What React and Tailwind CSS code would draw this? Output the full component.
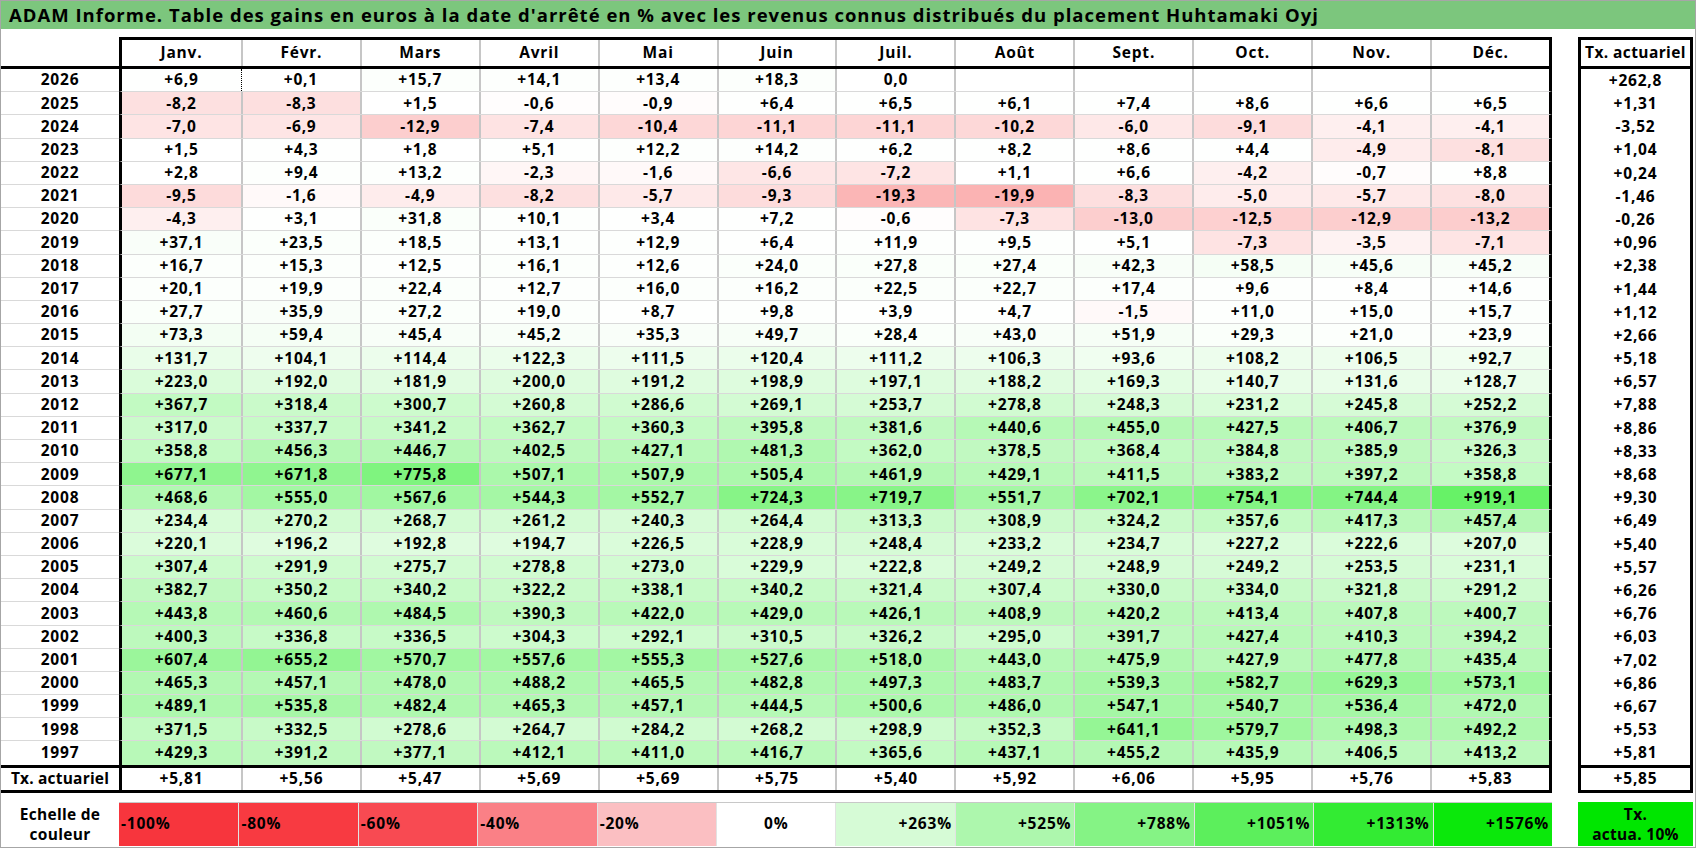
import React from "react";

const months = ["Janv.", "Févr.", "Mars", "Avril", "Mai", "Juin", "Juil.", "Août", "Sept.", "Oct.", "Nov.", "Déc."];

const raw = `2026|+6,9 +0,1 +15,7 +14,1 +13,4 +18,3 0,0 _ _ _ _ _|+262,8
2025|-8,2 -8,3 +1,5 -0,6 -0,9 +6,4 +6,5 +6,1 +7,4 +8,6 +6,6 +6,5|+1,31
2024|-7,0 -6,9 -12,9 -7,4 -10,4 -11,1 -11,1 -10,2 -6,0 -9,1 -4,1 -4,1|-3,52
2023|+1,5 +4,3 +1,8 +5,1 +12,2 +14,2 +6,2 +8,2 +8,6 +4,4 -4,9 -8,1|+1,04
2022|+2,8 +9,4 +13,2 -2,3 -1,6 -6,6 -7,2 +1,1 +6,6 -4,2 -0,7 +8,8|+0,24
2021|-9,5 -1,6 -4,9 -8,2 -5,7 -9,3 -19,3 -19,9 -8,3 -5,0 -5,7 -8,0|-1,46
2020|-4,3 +3,1 +31,8 +10,1 +3,4 +7,2 -0,6 -7,3 -13,0 -12,5 -12,9 -13,2|-0,26
2019|+37,1 +23,5 +18,5 +13,1 +12,9 +6,4 +11,9 +9,5 +5,1 -7,3 -3,5 -7,1|+0,96
2018|+16,7 +15,3 +12,5 +16,1 +12,6 +24,0 +27,8 +27,4 +42,3 +58,5 +45,6 +45,2|+2,38
2017|+20,1 +19,9 +22,4 +12,7 +16,0 +16,2 +22,5 +22,7 +17,4 +9,6 +8,4 +14,6|+1,44
2016|+27,7 +35,9 +27,2 +19,0 +8,7 +9,8 +3,9 +4,7 -1,5 +11,0 +15,0 +15,7|+1,12
2015|+73,3 +59,4 +45,4 +45,2 +35,3 +49,7 +28,4 +43,0 +51,9 +29,3 +21,0 +23,9|+2,66
2014|+131,7 +104,1 +114,4 +122,3 +111,5 +120,4 +111,2 +106,3 +93,6 +108,2 +106,5 +92,7|+5,18
2013|+223,0 +192,0 +181,9 +200,0 +191,2 +198,9 +197,1 +188,2 +169,3 +140,7 +131,6 +128,7|+6,57
2012|+367,7 +318,4 +300,7 +260,8 +286,6 +269,1 +253,7 +278,8 +248,3 +231,2 +245,8 +252,2|+7,88
2011|+317,0 +337,7 +341,2 +362,7 +360,3 +395,8 +381,6 +440,6 +455,0 +427,5 +406,7 +376,9|+8,86
2010|+358,8 +456,3 +446,7 +402,5 +427,1 +481,3 +362,0 +378,5 +368,4 +384,8 +385,9 +326,3|+8,33
2009|+677,1 +671,8 +775,8 +507,1 +507,9 +505,4 +461,9 +429,1 +411,5 +383,2 +397,2 +358,8|+8,68
2008|+468,6 +555,0 +567,6 +544,3 +552,7 +724,3 +719,7 +551,7 +702,1 +754,1 +744,4 +919,1|+9,30
2007|+234,4 +270,2 +268,7 +261,2 +240,3 +264,4 +313,3 +308,9 +324,2 +357,6 +417,3 +457,4|+6,49
2006|+220,1 +196,2 +192,8 +194,7 +226,5 +228,9 +248,4 +233,2 +234,7 +227,2 +222,6 +207,0|+5,40
2005|+307,4 +291,9 +275,7 +278,8 +273,0 +229,9 +222,8 +249,2 +248,9 +249,2 +253,5 +231,1|+5,57
2004|+382,7 +350,2 +340,2 +322,2 +338,1 +340,2 +321,4 +307,4 +330,0 +334,0 +321,8 +291,2|+6,26
2003|+443,8 +460,6 +484,5 +390,3 +422,0 +429,0 +426,1 +408,9 +420,2 +413,4 +407,8 +400,7|+6,76
2002|+400,3 +336,8 +336,5 +304,3 +292,1 +310,5 +326,2 +295,0 +391,7 +427,4 +410,3 +394,2|+6,03
2001|+607,4 +655,2 +570,7 +557,6 +555,3 +527,6 +518,0 +443,0 +475,9 +427,9 +477,8 +435,4|+7,02
2000|+465,3 +457,1 +478,0 +488,2 +465,5 +482,8 +497,3 +483,7 +539,3 +582,7 +629,3 +573,1|+6,86
1999|+489,1 +535,8 +482,4 +465,3 +457,1 +444,5 +500,6 +486,0 +547,1 +540,7 +536,4 +472,0|+6,67
1998|+371,5 +332,5 +278,6 +264,7 +284,2 +268,2 +298,9 +352,3 +641,1 +579,7 +498,3 +492,2|+5,53
1997|+429,3 +391,2 +377,1 +412,1 +411,0 +416,7 +365,6 +437,1 +455,2 +435,9 +406,5 +413,2|+5,81`;

const rows = raw.split("\n").map((line) => {
  const [y, vals, tx] = line.split("|");
  return { year: y, vals: vals.split(" ").map((v) => (v === "_" ? "" : v)), tx };
});

const totals = ["+5,81", "+5,56", "+5,47", "+5,69", "+5,69", "+5,75", "+5,40", "+5,92", "+6,06", "+5,95", "+5,76", "+5,83"];

const legend = [
  { t: "-100%", c: "#f7353d", a: "left" },
  { t: "-80%", c: "#f83a41", a: "left" },
  { t: "-60%", c: "#f84a52", a: "left" },
  { t: "-40%", c: "#fa8086", a: "left" },
  { t: "-20%", c: "#fbbfc2", a: "left" },
  { t: "0%", c: "#ffffff", a: "center" },
  { t: "+263%", c: "#d6fbd6", a: "right" },
  { t: "+525%", c: "#adf7ad", a: "right" },
  { t: "+788%", c: "#85f385", a: "right" },
  { t: "+1051%", c: "#5cef5c", a: "right" },
  { t: "+1313%", c: "#33eb33", a: "right" },
  { t: "+1576%", c: "#0be80b", a: "right" },
];

function cellColor(s) {
  if (!s) return "#ffffff";
  const v = parseFloat(s.replace(",", "."));
  if (v < 0) {
    const a = Math.min(-v, 60);
    const r = Math.round(255 - 0.2 * a);
    const g = Math.round(255 - 3.8 * a);
    return `rgb(${r},${g},${g})`;
  }
  const rb = Math.max(0, Math.round(255 - 0.165 * v));
  const g = Math.round(255 - 0.0146 * v);
  return `rgb(${rb},${g},${rb})`;
}

export default function App() {
  return (
    <div className="w-[1696px] h-[848px] bg-white border border-[#a6a6a6] flex flex-col font-['Open_Sans',sans-serif] font-bold text-black overflow-hidden">
      {/* Title */}
      <div className="h-[28px] bg-[#7cc67d] flex items-center pl-[8px] text-[18.5px] tracking-[1px] leading-none shrink-0">
        ADAM Informe. Table des gains en euros à la date d'arrêté en % avec les revenus connus distribués du placement Huhtamaki Oyj
      </div>

      <div className="h-[8px] shrink-0" />

      <div className="flex flex-col text-[15.5px] tracking-[0.8px] leading-none">
        {/* Header row */}
        <div className="flex h-[32px]">
          <div className="w-[118px] border-b-[3px] border-black" />
          <div className="w-[1433px] border-[3px] border-black grid grid-cols-12">
            {months.map((m, i) => (
              <div key={m} className={`flex items-center justify-center ${i > 0 ? "border-l-2 border-[#c6c6c6]" : ""}`}>
                {m}
              </div>
            ))}
          </div>
          <div className="w-[26px]" />
          <div className="w-[115px] border-[3px] border-black flex items-center justify-center tracking-[0.4px]">
            Tx. actuariel
          </div>
        </div>

        {/* Data rows */}
        {rows.map((r, ri) => {
          const last = ri === rows.length - 1;
          const lineCls = last ? "" : "border-b border-[#d9d9d9]";
          return (
            <div key={r.year} className="flex h-[23.2px]">
              <div className={`w-[118px] flex items-center justify-center ${lineCls}`}>{r.year}</div>
              <div className={`w-[1433px] border-x-[3px] border-x-black grid grid-cols-12 ${lineCls}`}>
                {r.vals.map((v, i) => {
                  let b = "";
                  if (i > 0) {
                    b = ri === 0 && i === 1 ? "border-l border-dotted border-black" : "border-l-2 border-[#c6c6c6]";
                  }
                  return (
                    <div key={i} className={`flex items-center justify-center ${b}`} style={{ backgroundColor: cellColor(v) }}>
                      {v}
                    </div>
                  );
                })}
              </div>
              <div className="w-[26px]" />
              <div className="w-[115px] border-x-[3px] border-black flex items-center justify-center">{r.tx}</div>
            </div>
          );
        })}

        {/* Totals row */}
        <div className="flex h-[28px]">
          <div className="w-[118px] border-y-[3px] border-black flex items-center justify-center tracking-[0.2px]">
            Tx. actuariel
          </div>
          <div className="w-[1433px] border-[3px] border-black grid grid-cols-12">
            {totals.map((v, i) => (
              <div key={i} className={`flex items-center justify-center ${i > 0 ? "border-l-2 border-[#c6c6c6]" : ""}`}>
                {v}
              </div>
            ))}
          </div>
          <div className="w-[26px]" />
          <div className="w-[115px] border-[3px] border-black flex items-center justify-center">+5,85</div>
        </div>

        <div className="h-[9px]" />

        {/* Legend */}
        <div className="flex h-[44px]">
          <div className="w-[118px] flex flex-col items-center justify-center leading-[20px] tracking-[0.3px]">
            <span>Echelle de</span>
            <span>couleur</span>
          </div>
          <div className="w-[1433px] grid grid-cols-12 border-t border-[#c8c8c8]">
            {legend.map((l, i) => (
              <div
                key={l.t}
                className={`flex items-center ${
                  l.a === "left" ? "justify-start pl-[2px]" : l.a === "right" ? "justify-end pr-[3px]" : "justify-center"
                } ${i > 0 ? "border-l border-[#e2e2e2]" : ""}`}
                style={{ backgroundColor: l.c }}
              >
                {l.t}
              </div>
            ))}
          </div>
          <div className="w-[26px]" />
          <div className="w-[115px] bg-[#00e600] flex flex-col items-center justify-center leading-[20px] tracking-[0.3px]">
            <span>Tx.</span>
            <span>actua. 10%</span>
          </div>
        </div>
      </div>
    </div>
  );
}
